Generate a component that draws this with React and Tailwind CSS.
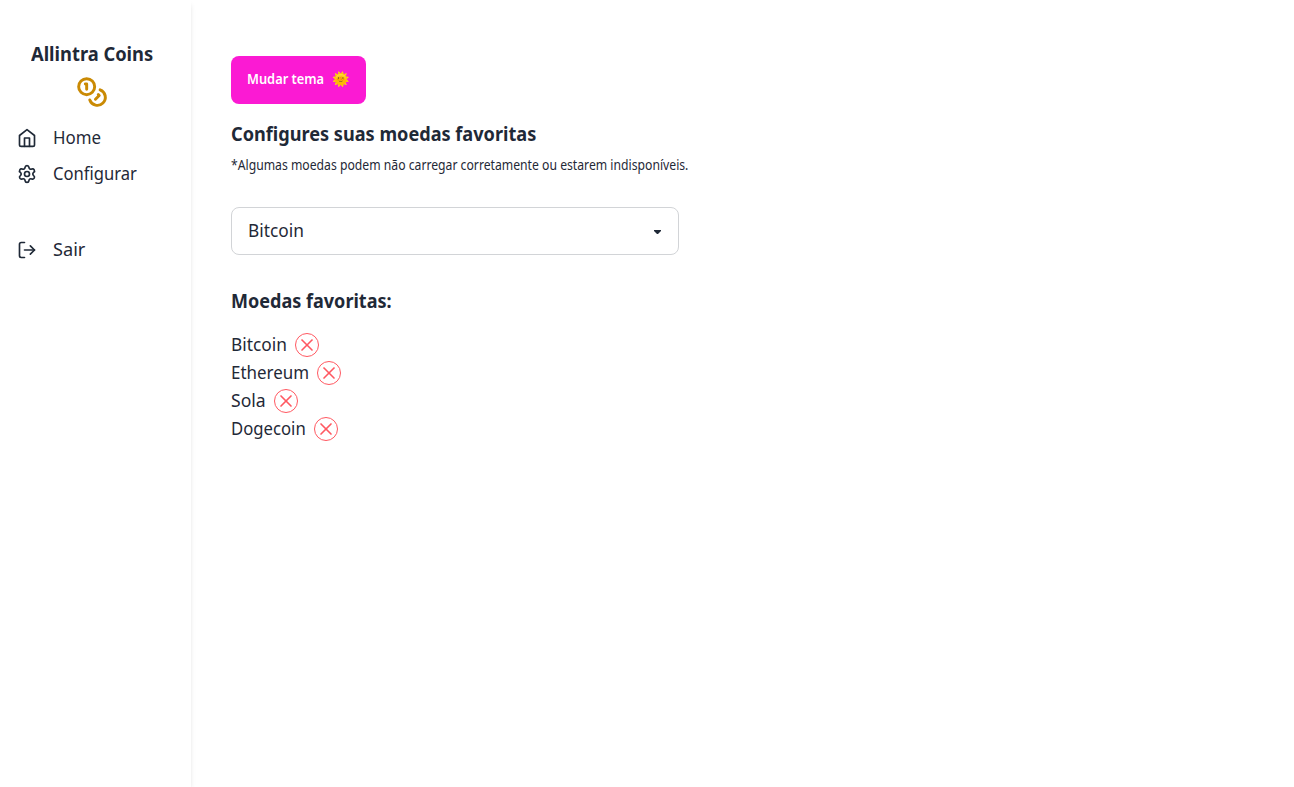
import { useLayoutEffect, useRef, useState } from "react";
import { Coins, Settings, LogOut, X } from "lucide-react";

const navItem = "flex h-9 items-center gap-4 pl-[17px]";
const label = "-mt-[3px] text-[17.6px] leading-7";
const heading = "text-[19.5px] leading-7 font-bold";

const coins = [
  { name: "Bitcoin", width: 56 },
  { name: "Ethereum", width: 78 },
  { name: "Sola", width: 35 },
  { name: "Dogecoin", width: 75 },
];

// Condenses a line of text horizontally so that it fills the given width.
function Fit({ width, className = "", children }) {
  const ref = useRef(null);
  const [scale, setScale] = useState(1);
  useLayoutEffect(() => {
    setScale(width / ref.current.offsetWidth);
  }, [width]);
  return (
    <span className={"block whitespace-nowrap " + className} style={{ width }}>
      <span ref={ref} className="inline-block origin-left align-top" style={{ transform: `scaleX(${scale})` }}>
        {children}
      </span>
    </span>
  );
}

function HomeIcon() {
  return (
    <svg viewBox="0 0 24 24" fill="none" stroke="currentColor" strokeWidth="2" strokeLinecap="round" strokeLinejoin="round" className="size-5">
      <path d="m3 9 9-7 9 7v11a2 2 0 0 1-2 2H5a2 2 0 0 1-2-2z" />
      <path d="M9 22V12h6v10" />
    </svg>
  );
}

export default function App() {
  return (
    <div className="flex h-screen overflow-hidden bg-white font-['Noto_Sans',sans-serif] text-[#1f2937]">
      <aside className="flex w-[191px] shrink-0 flex-col pt-10 pr-[7px] shadow-md">
        <h1 className={heading + " flex justify-center"}><Fit width={122}>Allintra Coins</Fit></h1>
        <Coins className="mx-auto mt-2 size-8 text-[#ca8a04]" strokeWidth={2.2} />
        <nav className="mt-3 flex flex-col">
          <a className={navItem}><HomeIcon /><Fit width={48} className={label}>Home</Fit></a>
          <a className={navItem}><Settings className="size-5" /><Fit width={84} className={label}>Configurar</Fit></a>
          <a className={navItem + " mt-10"}><LogOut className="size-5" /><Fit width={32} className={label}>Sair</Fit></a>
        </nav>
      </aside>
      <main className="flex flex-col items-start pt-14 pl-10">
        <button className="flex h-12 w-[135px] items-center gap-2 rounded-lg bg-[#fb1ad3] pl-4 text-sm font-semibold text-white">
          <Fit width={77} className="-mt-0.5">Mudar tema</Fit>
          <span className="-mt-0.5">🌞</span>
        </button>
        <h2 className={heading + " mt-4"}><Fit width={305}>Configures suas moedas favoritas</Fit></h2>
        <p className="mt-[7px] text-[13.5px] leading-5"><Fit width={457}>*Algumas moedas podem não carregar corretamente ou estarem indisponíveis.</Fit></p>
        <div className="mt-8 flex h-12 w-[448px] items-center justify-between rounded-lg border border-[#d2d4d7] px-4">
          <Fit width={56} className={label}>Bitcoin</Fit>
          <svg viewBox="0 0 7 4" className="mt-px mr-px h-1 w-[7px]" fill="currentColor"><path d="M0 0h7v1L4 4H3L0 1z" /></svg>
        </div>
        <h2 className={heading + " mt-8"}><Fit width={161}>Moedas favoritas:</Fit></h2>
        <ul className="mt-4">
          {coins.map((coin) => (
            <li key={coin.name} className="flex h-7 items-center gap-2">
              <Fit width={coin.width} className={label}>{coin.name}</Fit>
              <button className="flex size-6 items-center justify-center rounded-full border border-[#ff5861] text-[#ff5861]">
                <X className="size-5 shrink-0" strokeWidth={2} />
              </button>
            </li>
          ))}
        </ul>
      </main>
    </div>
  );
}
